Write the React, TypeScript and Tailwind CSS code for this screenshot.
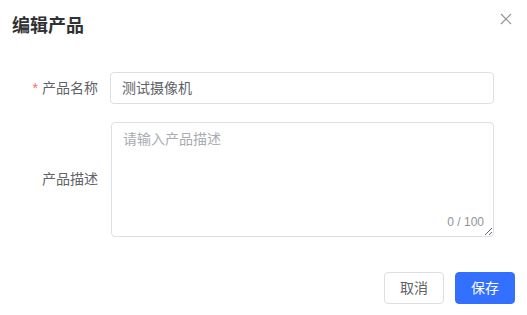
const FONT = "font-['Helvetica_Neue','Liberation_Sans','Noto_Sans_CJK_SC',sans-serif]"

export default function App() {
  return (
    <div className={`w-[527px] h-[315px] bg-white flex flex-col ${FONT}`}>
      {/* Header */}
      <div className="flex items-start justify-between pl-3 pr-[15px] pt-[14px]">
        <h2 className="text-[18px] leading-6 font-bold text-[#303133]">编辑产品</h2>
        <button className="mt-[-1px] text-[#909399]">
          <svg width="12" height="12" viewBox="0 0 12 12" fill="none" stroke="currentColor" strokeWidth="1.2">
            <path d="M1 1L11 11M11 1L1 11" />
          </svg>
        </button>
      </div>

      {/* Form */}
      <div className="mt-[34px] flex flex-col gap-[18px] pr-[33px]">
        <div className="flex items-center">
          <label className="w-[110px] shrink-0 pr-3 text-right text-[14px] text-[#606266]">
            <span className="text-[#f56c6c] mr-1">*</span>
            产品名称
          </label>
          <div className="flex-1 h-[32px] rounded-[4px] border border-[#dcdfe6] px-[11px] flex items-center text-[14px] text-[#606266]">
            测试摄像机
          </div>
        </div>

        <div className="flex items-center">
          <label className="w-[110px] shrink-0 pr-3 text-right text-[14px] text-[#606266]">
            产品描述
          </label>
          <div className="relative flex-1 h-[115px] ml-px">
            <textarea
              className="w-full h-full resize-y rounded-[4px] border border-[#dcdfe6] px-[11px] py-[5px] text-[14px] leading-[22px] text-[#606266] placeholder:text-[#a8abb2] outline-none"
              placeholder="请输入产品描述"
            />
            <span className="absolute right-[10px] bottom-[5px] text-[12px] leading-5 text-[#909399]">
              0 / 100
            </span>
          </div>
        </div>
      </div>

      {/* Footer */}
      <div className="mt-[35px] flex justify-end gap-[11px] pr-3">
        <button className="h-[32px] px-[15px] rounded-[4px] border border-[#dcdfe6] bg-white text-[14px] text-[#606266]">
          取消
        </button>
        <button className="h-[32px] px-[15px] rounded-[4px] border border-[#3370ff] bg-[#3370ff] text-[14px] text-white">
          保存
        </button>
      </div>
    </div>
  )
}
